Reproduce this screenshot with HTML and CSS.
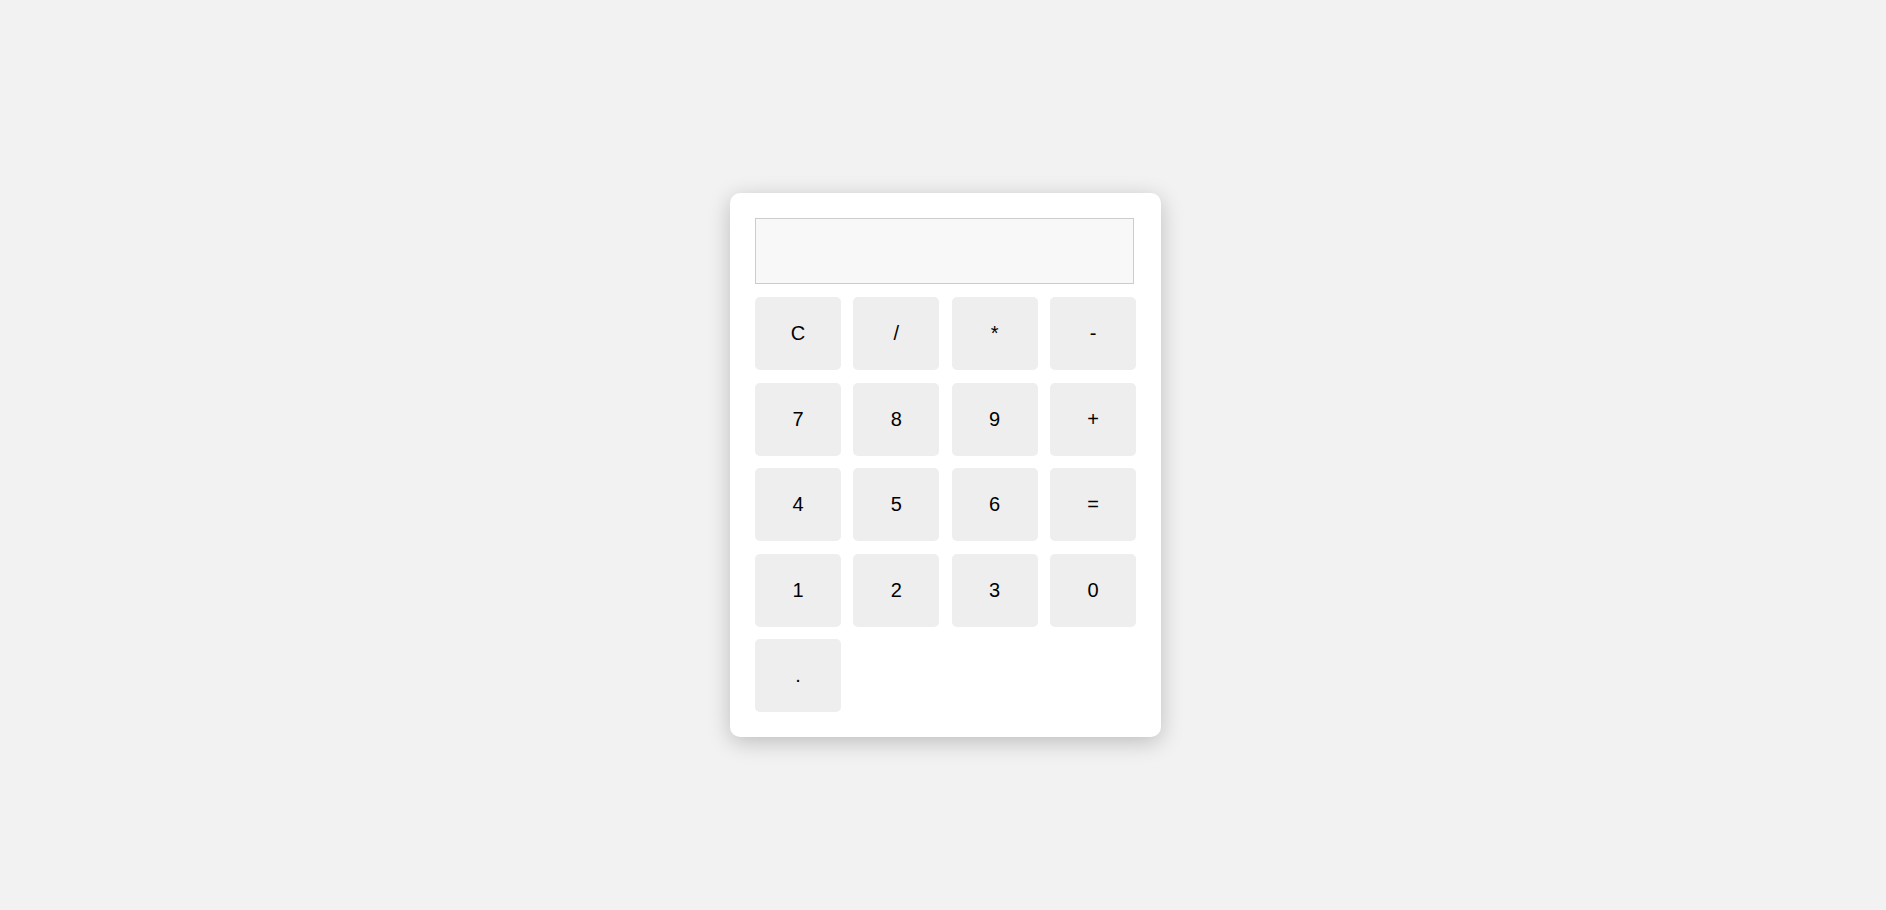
FILE: index.html
```html
<!DOCTYPE html>
<html lang="en">
<head>
<meta charset="utf-8">
<title>Calculator</title>
<link rel="stylesheet" href="styles.css">
</head>
<body>
  <div class="calculator">
    <input class="display" type="text" readonly>
    <div class="keys">
      <button class="key">C</button>
      <button class="key">/</button>
      <button class="key">*</button>
      <button class="key">-</button>
      <button class="key">7</button>
      <button class="key">8</button>
      <button class="key">9</button>
      <button class="key">+</button>
      <button class="key">4</button>
      <button class="key">5</button>
      <button class="key">6</button>
      <button class="key">=</button>
      <button class="key">1</button>
      <button class="key">2</button>
      <button class="key">3</button>
      <button class="key">0</button>
      <button class="key">.</button>
    </div>
  </div>
</body>
</html>
```
FILE: styles.css
```css
* {
  box-sizing: border-box;
}

html, body {
  margin: 0;
  height: 100%;
}

body {
  background: #f2f2f2;
  font-family: "Liberation Sans", Arial, sans-serif;
  display: flex;
  align-items: center;
  justify-content: center;
  padding: 20px 0 0 5px;
}

.calculator {
  width: 431px;
  background: #ffffff;
  border-radius: 10px;
  padding: 25px;
  box-shadow: 0 5px 22px rgba(0, 0, 0, 0.22);
}

.display {
  display: block;
  width: 379px;
  height: 66px;
  margin: 0 0 13px 0;
  background: #f8f8f8;
  border: 1px solid #cccccc;
  border-radius: 0;
  font-family: inherit;
  font-size: 24px;
  text-align: right;
  padding: 10px;
  outline: none;
}

.keys {
  display: grid;
  grid-template-columns: repeat(4, 1fr);
  column-gap: 12.3px;
  row-gap: 12.5px;
}

.key {
  height: 73px;
  background: #eeeeee;
  border: none;
  border-radius: 5px;
  font-family: inherit;
  font-size: 20px;
  color: #000000;
  padding: 0;
  cursor: pointer;
}
```
